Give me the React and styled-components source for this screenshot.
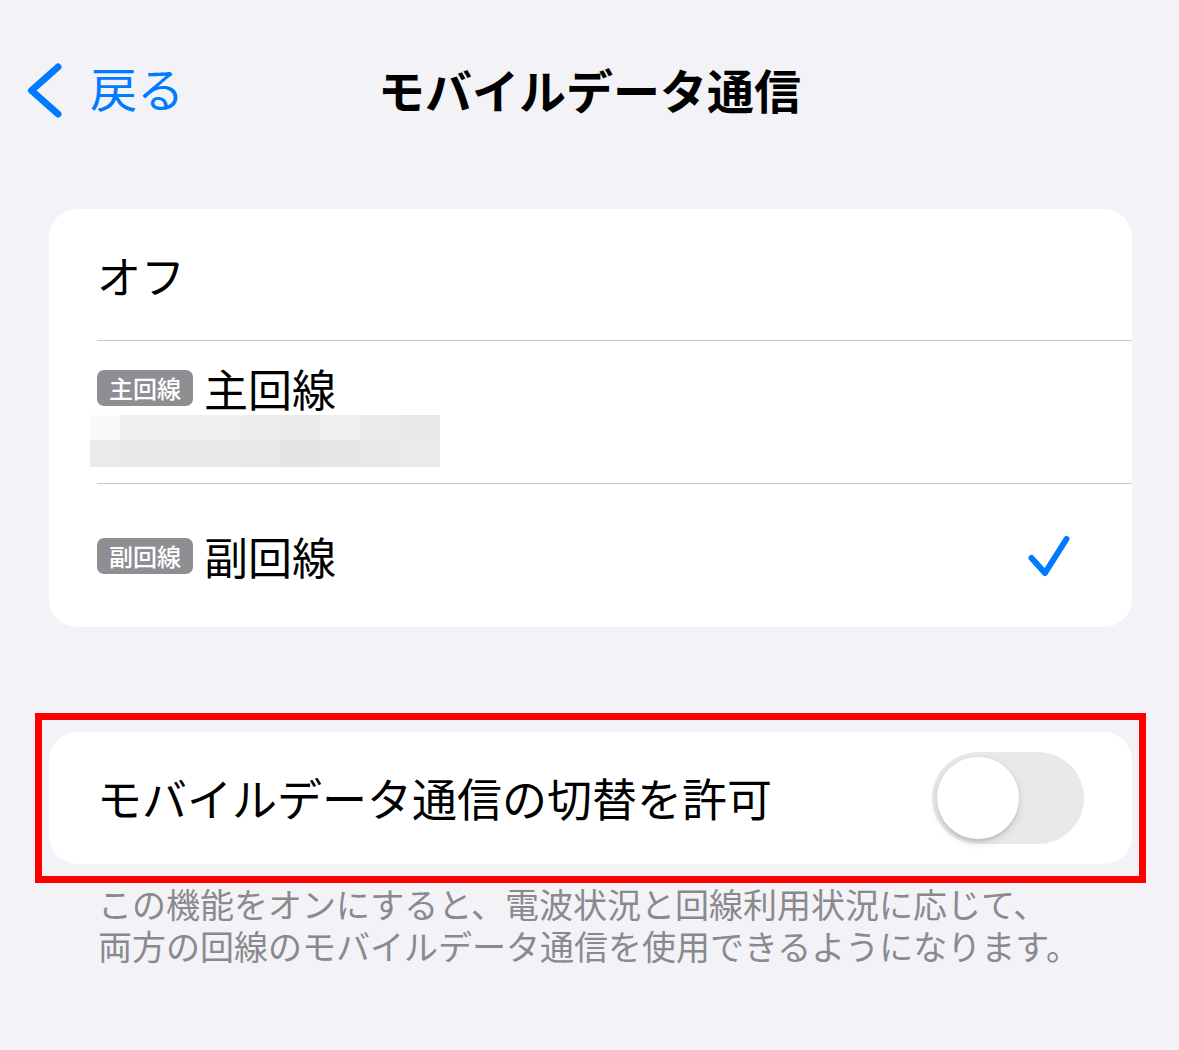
import React from "react";
import styled, { createGlobalStyle } from "styled-components";

const Global = createGlobalStyle`
  html, body { margin: 0; padding: 0; background: #f2f2f7; }
  body { font-family: "Noto Sans CJK JP", "Noto Sans", sans-serif; color: #000; }
`;

const Page = styled.div`
  width: 1179px;
  min-height: 1050px;
  background: #f2f2f7;
`;

const NavBar = styled.header`
  display: grid;
  grid-template-columns: 1fr auto 1fr;
  align-items: center;
  height: 90px;
  padding-top: 46px;
`;

const BackButton = styled.div`
  display: flex;
  align-items: center;
  gap: 24px;
  padding-left: 26px;
  color: #007aff;
  font-size: 47px;
  line-height: 1;
`;

const BackLabel = styled.span`
  margin-top: -10px;
`;

const Title = styled.h1`
  margin: -6px 0 0;
  font-size: 47px;
  font-weight: 700;
  line-height: 1;
  letter-spacing: 0;
`;

const Content = styled.main`
  padding: 73px 47px 0 49px;
`;

const Card = styled.section`
  background: #ffffff;
  border-radius: 28px;
  overflow: hidden;
`;

const Row = styled.div`
  display: flex;
  align-items: center;
  height: ${(p) => p.$h}px;
  padding: 0 60px 0 48px;
`;

const StackRow = styled.div`
  display: flex;
  flex-direction: column;
  height: 142px;
  padding: 21px 60px 0 48px;
  box-sizing: border-box;
`;

const Separator = styled.div`
  height: 1px;
  margin-left: 48px;
  background: #c6c6c8;
`;

const Label = styled.span`
  font-size: ${(p) => p.$size || 44}px;
  line-height: 52px;
`;

const LineTitle = styled.div`
  display: flex;
  align-items: center;
  gap: 11px;
  height: 52px;
`;

const Badge = styled.span`
  display: inline-flex;
  align-items: center;
  justify-content: center;
  width: 96px;
  height: 36px;
  border-radius: 7px;
  background: #8e8e93;
  color: #fff;
  font-size: 24px;
  font-weight: 500;
  line-height: 1;
`;

const Mosaic = styled.div`
  display: grid;
  grid-template-columns: 30px repeat(8, 40px);
  grid-template-rows: 25px 27px;
  margin: 1px 0 0 -7px;
  width: 350px;
`;

const Tile = styled.div`
  background: ${(p) => p.$c};
`;

const Check = styled.svg`
  margin-left: auto;
  margin-right: 0;
  width: 48px;
  height: 48px;
`;

const Highlight = styled.div`
  margin: 86px -14px 0 -14px;
  border: 7px solid #ff0000;
  padding: 12px 7px;
`;

const ToggleRow = styled.div`
  display: flex;
  align-items: center;
  justify-content: space-between;
  height: 132px;
  padding: 0 48px 0 48px;
  background: #fff;
  border-radius: 28px;
`;

const Switch = styled.div`
  position: relative;
  width: 152px;
  height: 92px;
  border-radius: 46px;
  background: #e9e9ea;
`;

const Knob = styled.div`
  position: absolute;
  top: 5px;
  left: 5px;
  width: 82px;
  height: 82px;
  border-radius: 50%;
  background: #fff;
  box-shadow: 0 3px 8px rgba(0, 0, 0, 0.15), 0 3px 1px rgba(0, 0, 0, 0.06);
`;

const Footer = styled.p`
  margin: 0;
  padding: 0 0 0 49px;
  font-size: 34px;
  line-height: 42px;
  color: #8a8a8e;
`;

const mosaic = [
  "#fafafa", "#efefef", "#efefef", "#f0f0f0", "#eeeeee", "#ebebeb", "#efefef", "#ebebeb", "#e9e9e9",
  "#ebebeb", "#e9e9e9", "#e9e9e9", "#e9e9e9", "#e8e8e8", "#e4e4e4", "#e6e6e6", "#e8e8e8", "#ebebeb",
];

export default function App() {
  return (
    <Page>
      <Global />
      <NavBar>
        <BackButton>
          <svg width="40" height="60" viewBox="0 0 40 60">
            <path
              d="M32 6 L5.5 29.5 L32 53"
              fill="none"
              stroke="#007aff"
              strokeWidth="7"
              strokeLinecap="round"
              strokeLinejoin="round"
            />
          </svg>
          <BackLabel>戻る</BackLabel>
        </BackButton>
        <Title>モバイルデータ通信</Title>
        <div />
      </NavBar>
      <Content>
        <Card>
          <Row $h={131}>
            <Label>オフ</Label>
          </Row>
          <Separator />
          <StackRow>
            <LineTitle>
              <Badge>主回線</Badge>
              <Label>主回線</Label>
            </LineTitle>
            <Mosaic>
              {mosaic.map((c, i) => (
                <Tile key={i} $c={c} />
              ))}
            </Mosaic>
          </StackRow>
          <Separator />
          <Row $h={143}>
            <LineTitle>
              <Badge>副回線</Badge>
              <Label>副回線</Label>
            </LineTitle>
            <Check viewBox="0 0 48 48">
              <path
                d="M7.5 26 L21 41 L42.5 7"
                fill="none"
                stroke="#007aff"
                strokeWidth="6"
                strokeLinecap="round"
                strokeLinejoin="round"
              />
            </Check>
          </Row>
        </Card>
        <Highlight>
          <ToggleRow>
            <Label $size={45}>モバイルデータ通信の切替を許可</Label>
            <Switch>
              <Knob />
            </Switch>
          </ToggleRow>
        </Highlight>
        <Footer>
          この機能をオンにすると、電波状況と回線利用状況に応じて、
          <br />
          両方の回線のモバイルデータ通信を使用できるようになります。
        </Footer>
      </Content>
    </Page>
  );
}
